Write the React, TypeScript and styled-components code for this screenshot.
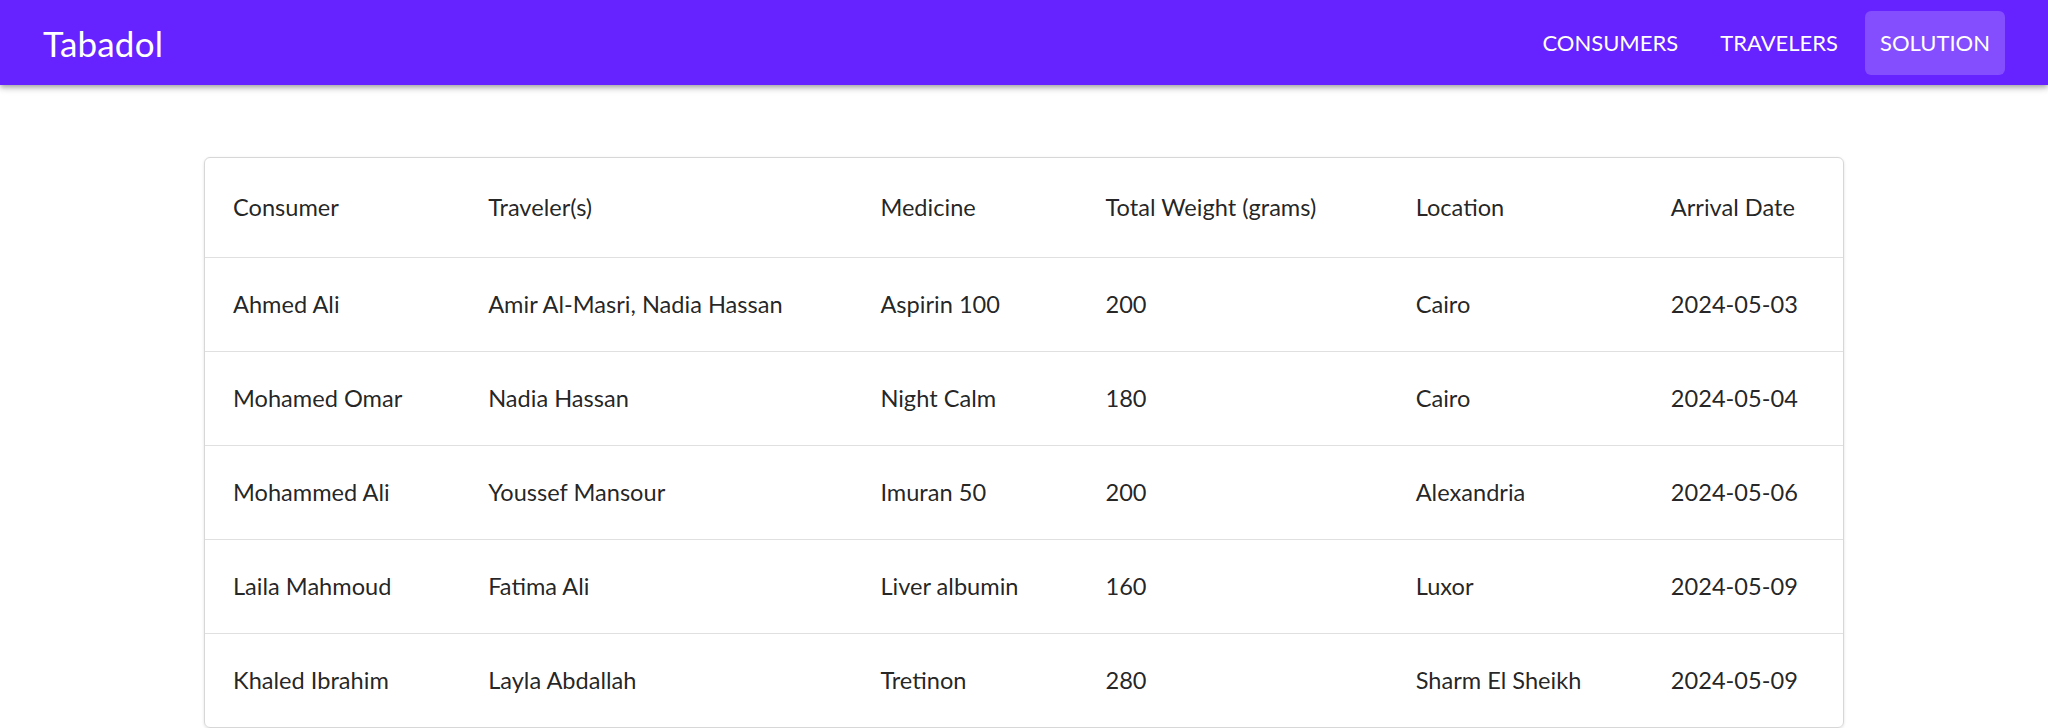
import React from "react";
import styled, { createGlobalStyle } from "styled-components";

const Global = createGlobalStyle`
  html, body { margin: 0; padding: 0; background: #ffffff; }
  body { font-family: Lato, "Noto Sans", sans-serif; color: rgba(0,0,0,0.87); }
  * { box-sizing: border-box; }
`;

const Bar = styled.header`
  height: 85px;
  background: #6622ff;
  display: flex;
  align-items: center;
  justify-content: space-between;
  padding: 0 43px;
  box-shadow: 0 2px 4px -1px rgba(0,0,0,0.2), 0 4px 5px 0 rgba(0,0,0,0.14), 0 1px 10px 0 rgba(0,0,0,0.12);
  position: relative;
  z-index: 1;
`;

const Brand = styled.div`
  color: #fff;
  font-size: 35px;
  font-weight: 400;
  letter-spacing: 0.2px;
`;

const Nav = styled.nav`
  display: flex;
  align-items: center;
  gap: 12px;
`;

const NavButton = styled.button<{ $active?: boolean }>`
  height: 64px;
  padding: 0 15px;
  border: none;
  border-radius: 6px;
  font-family: inherit;
  font-size: 22px;
  color: #fff;
  text-transform: uppercase;
  background: ${(p) => (p.$active ? "rgba(255,255,255,0.2)" : "transparent")};
  cursor: pointer;
`;

const Main = styled.main`
  padding: 72px 204px 0;
`;

const Card = styled.div`
  border: 1px solid #d7d7d7;
  border-radius: 6px;
  box-shadow: 0 1px 3px rgba(0,0,0,0.12);
  overflow: hidden;
`;

const Table = styled.table`
  width: 100%;
  border-collapse: collapse;
  table-layout: fixed;
`;

const Th = styled.th<{ $w: number }>`
  width: ${(p) => p.$w}px;
  height: 99px;
  text-align: left;
  font-weight: 400;
  font-size: 23.6px;
  padding: 0 28px;
  color: rgba(0,0,0,0.87);
  border-bottom: 1px solid #e0e0e0;
`;

const Td = styled.td`
  height: 94px;
  padding: 0 28px;
  font-size: 23.6px;
  color: rgba(0,0,0,0.87);
  border-bottom: 1px solid #e0e0e0;
  white-space: nowrap;
  tr:last-child > & { border-bottom: none; }
`;

const columns: [string, number][] = [
  ["Consumer", 255],
  ["Traveler(s)", 392],
  ["Medicine", 225],
  ["Total Weight (grams)", 310],
  ["Location", 255],
  ["Arrival Date", 200],
];

const rows = [
  ["Ahmed Ali", "Amir Al-Masri, Nadia Hassan", "Aspirin 100", "200", "Cairo", "2024-05-03"],
  ["Mohamed Omar", "Nadia Hassan", "Night Calm", "180", "Cairo", "2024-05-04"],
  ["Mohammed Ali", "Youssef Mansour", "Imuran 50", "200", "Alexandria", "2024-05-06"],
  ["Laila Mahmoud", "Fatima Ali", "Liver albumin", "160", "Luxor", "2024-05-09"],
  ["Khaled Ibrahim", "Layla Abdallah", "Tretinon", "280", "Sharm El Sheikh", "2024-05-09"],
];

export default function App() {
  return (
    <>
      <Global />
      <Bar>
        <Brand>Tabadol</Brand>
        <Nav>
          <NavButton>Consumers</NavButton>
          <NavButton>Travelers</NavButton>
          <NavButton $active>Solution</NavButton>
        </Nav>
      </Bar>
      <Main>
        <Card>
          <Table>
            <thead>
              <tr>
                {columns.map(([c, w]) => (
                  <Th key={c} $w={w}>{c}</Th>
                ))}
              </tr>
            </thead>
            <tbody>
              {rows.map((r, i) => (
                <tr key={i}>
                  {r.map((v, j) => (
                    <Td key={j}>{v}</Td>
                  ))}
                </tr>
              ))}
            </tbody>
          </Table>
        </Card>
      </Main>
    </>
  );
}
